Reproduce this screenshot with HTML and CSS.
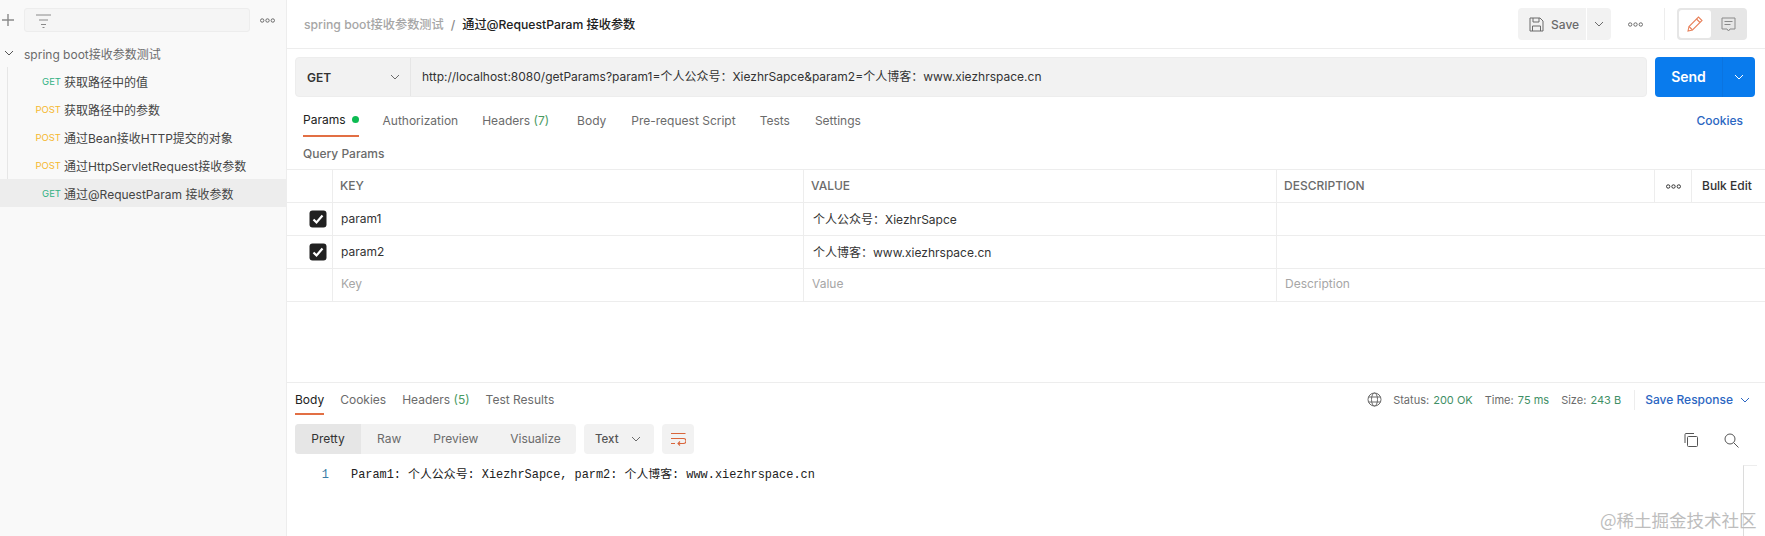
FILE: index.html
```html
<!DOCTYPE html>
<html lang="zh">
<head>
<meta charset="utf-8">
<title>Postman</title>
<link rel="stylesheet" href="styles.css">
</head>
<body>
<div class="app">
  <aside class="sidebar">
    <div class="side-top">
      <svg class="plus" width="14" height="14" viewBox="0 0 14 14"><path d="M7 1v12M1 7h12" stroke="#8a8a8a" stroke-width="1.4" fill="none"/></svg>
      <div class="side-search">
        <svg width="15" height="14" viewBox="0 0 15 14"><path d="M0 1h15M3 6h9M5 10.500h5M6.500 13.500h2" stroke="#8a8a8a" stroke-width="1" fill="none"/></svg>
      </div>
      <svg class="dots" width="15" height="5" viewBox="0 0 15 5"><g fill="none" stroke="#6b6b6b"><circle cx="2.200" cy="2.500" r="1.700"/><circle cx="7.500" cy="2.500" r="1.700"/><circle cx="12.800" cy="2.500" r="1.700"/></g></svg>
    </div>
    <div class="folder">
      <svg class="folder-chev" width="10" height="6" viewBox="0 0 10 6"><path d="M1 1l4 4 4-4" stroke="#555" fill="none"/></svg>
      <span>spring boot接收参数测试</span>
    </div>
    <ul class="tree">
      <li class="req"><span class="m get">GET</span><span>获取路径中的值</span></li>
      <li class="req"><span class="m post">POST</span><span>获取路径中的参数</span></li>
      <li class="req"><span class="m post">POST</span><span>通过Bean接收HTTP提交的对象</span></li>
      <li class="req"><span class="m post">POST</span><span>通过HttpServletRequest接收参数</span></li>
      <li class="req active"><span class="m get">GET</span><span>通过@RequestParam 接收参数</span></li>
    </ul>
  </aside>
  <main class="main">
    <header class="top">
      <div class="crumb"><span class="crumb-parent">spring boot接收参数测试</span><span class="crumb-sep">/</span><span class="crumb-cur">通过@RequestParam 接收参数</span></div>
      <div class="top-actions">
        <button class="save">
          <svg width="15" height="15" viewBox="0 0 15 15"><g fill="none" stroke="#6b6b6b"><path d="M1 1h10l3 3v10H1z"/><path d="M4 1v4h6V1M3.500 14V9h8v5"/></g></svg>
          <span>Save</span>
        </button>
        <button class="save-more"><svg width="10" height="6" viewBox="0 0 10 6"><path d="M1 1l4 4 4-4" stroke="#6b6b6b" fill="none"/></svg></button>
        <svg class="top-dots" width="15" height="5" viewBox="0 0 15 5"><g fill="none" stroke="#6b6b6b"><circle cx="2.200" cy="2.500" r="1.700"/><circle cx="7.500" cy="2.500" r="1.700"/><circle cx="12.800" cy="2.500" r="1.700"/></g></svg>
        <span class="vline"></span>
        <div class="toggle">
          <span class="toggle-on"><svg width="16" height="16" viewBox="0 0 16 16"><g fill="none" stroke="#e8825c" stroke-width="1.100"><path d="M1 15l1-4.500L11.500 1 15 4.500 5.500 14z"/><path d="M9.500 3l3.500 3.500M2 10.500L5.500 14"/></g></svg></span>
          <span class="toggle-off"><svg width="15" height="15" viewBox="0 0 15 15"><g fill="none" stroke="#8a8a8a"><path d="M1 1h13v11H9l-1.500 2L6 12H1z"/><path d="M3.500 4.500h8M3.500 7.500h6"/></g></svg></span>
        </div>
      </div>
    </header>
    <div class="urlrow">
      <div class="urlbar">
        <div class="method"><span>GET</span><svg width="10" height="6" viewBox="0 0 10 6"><path d="M1 1l4 4 4-4" stroke="#6b6b6b" fill="none"/></svg></div>
        <div class="url">http://localhost:8080/getParams?param1=个人公众号：XiezhrSapce&amp;param2=个人博客：www.xiezhrspace.cn</div>
      </div>
      <div class="send"><span class="send-l">Send</span><span class="send-r"><svg width="10" height="6" viewBox="0 0 10 6"><path d="M1 1l4 4 4-4" stroke="#fff" fill="none"/></svg></span></div>
    </div>
    <nav class="tabs">
      <span class="tab on">Params<i class="dot"></i></span>
      <span class="tab">Authorization</span>
      <span class="tab">Headers <em class="count">(7)</em></span>
      <span class="tab body-tab">Body</span>
      <span class="tab script-tab">Pre-request Script</span>
      <span class="tab">Tests</span>
      <span class="tab settings-tab">Settings</span>
      <span class="cookies">Cookies</span>
    </nav>
    <div class="qp">Query Params</div>
    <div class="grid">
      <div class="c first"></div><div class="c h">KEY</div><div class="c h">VALUE</div><div class="c h">DESCRIPTION</div><div class="c mid"><svg width="15" height="5" viewBox="0 0 15 5"><g fill="none" stroke="#333"><circle cx="2.200" cy="2.500" r="1.700"/><circle cx="7.500" cy="2.500" r="1.700"/><circle cx="12.800" cy="2.500" r="1.700"/></g></svg></div><div class="c bulk">Bulk Edit</div>
      <div class="c first chk"><svg width="18" height="18" viewBox="0 0 18 18"><rect x="0.500" y="0.500" width="17" height="17" rx="3" fill="#212121"/><path d="M4.500 9.500l3 3 6-7" stroke="#fff" stroke-width="2.200" fill="none"/></svg></div><div class="c">param1</div><div class="c val">个人公众号：XiezhrSapce</div><div class="c span3"></div>
      <div class="c first chk"><svg width="18" height="18" viewBox="0 0 18 18"><rect x="0.500" y="0.500" width="17" height="17" rx="3" fill="#212121"/><path d="M4.500 9.500l3 3 6-7" stroke="#fff" stroke-width="2.200" fill="none"/></svg></div><div class="c">param2</div><div class="c val">个人博客：www.xiezhrspace.cn</div><div class="c span3"></div>
      <div class="c first"></div><div class="c ph">Key</div><div class="c ph">Value</div><div class="c ph span3">Description</div>
    </div>
    <section class="resp">
      <div class="resp-head">
        <span class="rtab on">Body</span>
        <span class="rtab">Cookies</span>
        <span class="rtab">Headers <em class="count">(5)</em></span>
        <span class="rtab">Test Results</span>
        <div class="status">
          <svg width="15" height="15" viewBox="0 0 15 15"><g fill="none" stroke="#6b6b6b"><circle cx="7.500" cy="7.500" r="6.500"/><ellipse cx="7.500" cy="7.500" rx="3" ry="6.500"/><path d="M1.500 5h12M1.500 10h12"/></g></svg>
          <span class="st">Status: <b>200 OK</b></span>
          <span class="st">Time: <b>75 ms</b></span>
          <span class="st">Size: <b>243 B</b></span>
          <span class="vline short"></span>
          <span class="save-resp">Save Response</span>
          <svg width="10" height="6" viewBox="0 0 10 6"><path d="M1 1l4 4 4-4" stroke="#2b66c2" fill="none"/></svg>
        </div>
      </div>
      <div class="resp-tools">
        <div class="seg">
          <span class="seg-i on">Pretty</span><span class="seg-i raw">Raw</span><span class="seg-i prev">Preview</span><span class="seg-i vis">Visualize</span>
        </div>
        <div class="fmt"><span>Text</span><svg width="10" height="6" viewBox="0 0 10 6"><path d="M1 1l4 4 4-4" stroke="#6b6b6b" fill="none"/></svg></div>
        <div class="wrap"><svg width="15" height="14" viewBox="0 0 15 14"><g fill="none" stroke="#d9653b" stroke-width="1.100"><path d="M0 1.500h14.500M0 6.500h12.500a2 2 0 0 1 0 5H7M9 9.500l-2 2 2 2M0 11.500h4"/></g></svg></div>
        <div class="tools-r">
          <svg width="14" height="14" viewBox="0 0 14 14"><g fill="none" stroke="#555"><rect x="3.500" y="3.500" width="10" height="10" rx="1"/><path d="M1 10V1.500a1 1 0 0 1 1-1h8"/></g></svg>
          <svg width="15" height="15" viewBox="0 0 15 15"><g fill="none" stroke="#555"><circle cx="6" cy="6" r="5"/><path d="M9.700 9.700l4.800 4.800"/></g></svg>
        </div>
      </div>
      <div class="code"><span class="ln">1</span><span class="src">Param1: 个人公众号: XiezhrSapce, parm2: 个人博客: www.xiezhrspace.cn</span></div>
    </section>
  </main>
</div>
<div class="edge"></div>
<div class="watermark">@稀土掘金技术社区</div>
</body>
</html>
```
FILE: styles.css
```css
* { box-sizing: border-box; }
html, body { margin: 0; height: 536px; overflow: hidden; background: #fff; }
body { font-family: Inter, "Noto Sans CJK SC", sans-serif; font-size: 12px; color: #212121; position: relative; }
ul { list-style: none; margin: 0; padding: 0; }
button { font: inherit; border: 0; padding: 0; }
em { font-style: normal; }
svg { display: block; flex: none; }

.app { display: flex; height: 536px; }

.sidebar { width: 287px; flex: none; background: #f9f9f9; border-right: 1px solid #ededed; }
.side-top { display: flex; align-items: center; height: 24px; margin-top: 8px; padding-left: 1px; }
.side-search { width: 226px; height: 24px; margin-left: 9px; background: #f5f5f5; border: 1px solid #ededed; border-radius: 3px; padding: 5px 0 0 11px; }
.side-top .dots { margin-left: 10px; }
.folder { display: flex; align-items: center; height: 28px; margin-top: 7px; padding-left: 4px; color: #6b6b6b; }
.folder span { margin-left: 10px; }
.tree { margin-left: 7px; border-left: 1px solid #e6e6e6; }
.req { display: flex; align-items: center; height: 28px; color: #444; margin-left: -8px; }
.req.active { background: #ededed; }
.m { width: 61px; flex: none; text-align: right; font-size: 9.500px; }
.req .m + span { margin-left: 3px; }
.get { color: #34b184; }
.post { color: #f5b82e; }

.main { flex: 1; min-width: 0; display: flex; flex-direction: column; }
.top { height: 49px; flex: none; border-bottom: 1px solid #ededed; display: flex; align-items: center; justify-content: space-between; padding: 0 18px 0 17px; }
.crumb { display: flex; align-items: center; font-size: 12.200px; font-weight: 500; }
.crumb-parent { color: #a6a6a6; }
.crumb-sep { color: #8a8a8a; margin: 0 7px; }
.crumb-cur { color: #212121; }
.top-actions { display: flex; align-items: center; }
.save { display: flex; align-items: center; gap: 7px; width: 68px; height: 32px; padding-left: 11px; background: #f2f2f2; border-radius: 4px 0 0 4px; color: #6b6b6b; font-weight: 500; }
.save-more { width: 24px; height: 32px; margin-left: 1px; background: #f2f2f2; border-radius: 0 4px 4px 0; display: flex; align-items: center; justify-content: center; }
.top-dots { margin-left: 17px; }
.vline { width: 1px; height: 32px; background: #ededed; margin-left: 21px; }
.toggle { display: flex; width: 70px; height: 32px; margin-left: 12px; padding: 2px; background: #e6e6e6; border-radius: 4px; }
.toggle-on { width: 32px; background: #fff; border-radius: 3px; display: flex; align-items: center; justify-content: center; }
.toggle-off { flex: 1; display: flex; align-items: center; justify-content: center; }

.urlrow { display: flex; margin: 8px 10px 0 8px; height: 40px; flex: none; }
.urlbar { flex: 1; display: flex; background: #f2f2f2; border: 1px solid #ededed; border-radius: 4px; }
.method { width: 115px; flex: none; display: flex; align-items: center; justify-content: space-between; padding: 0 10px 0 11px; border-right: 1px solid #e6e6e6; font-weight: 600; color: #333; font-size: 12px; }
.url { padding-left: 11px; line-height: 37px; font-size: 12px; color: #333; }
.send { width: 100px; flex: none; margin-left: 8px; background: #097bed; color: #fff; border-radius: 4px; display: flex; font-weight: 600; font-size: 14px; }
.send-l { width: 68px; text-align: center; line-height: 40px; border-right: 1px solid #0b74e0; }
.send-r { flex: 1; display: flex; align-items: center; justify-content: center; }

.tabs { display: flex; align-items: flex-start; gap: 24px; height: 33px; margin-top: 7px; padding-left: 16px; flex: none; font-size: 12px; color: #6b6b6b; }
.tab { height: 33px; line-height: 33px; display: flex; gap: 4px; align-items: center; white-space: pre; }
.tab.on { color: #212121; border-bottom: 2px solid #e26f44; }
.body-tab { margin-left: 4px; }
.script-tab { margin-left: 1px; }
.settings-tab { margin-left: 1px; }
.count { color: #4a9a62; }
.dot { width: 7px; height: 7px; border-radius: 50%; background: #0cbb52; margin-left: 2px; }
.tab .count { margin-left: -4px; }
.cookies { margin-left: auto; margin-right: 22px; line-height: 33px; color: #2b66c2; font-weight: 500; }

.qp { flex: none; height: 32px; line-height: 34px; padding-left: 16px; font-weight: 500; color: #6b6b6b; font-size: 12px; }

.grid { flex: none; display: grid; grid-template-columns: 45px 471px 473px 378px 37px 1fr; grid-auto-rows: 33px; border-top: 1px solid #ededed; }
.c { border-bottom: 1px solid #ededed; border-left: 1px solid #ededed; display: flex; align-items: center; padding: 0 0 2px 8px; color: #333; font-size: 12px; min-width: 0; }
.first { border-left: 0; padding: 0; }
.chk { justify-content: flex-end; padding-right: 5px; }
.h { font-weight: 500; color: #6b6b6b; padding-left: 7px; }
.val { padding-left: 9px; }
.mid { padding: 0; justify-content: center; }
.bulk { font-weight: 500; white-space: nowrap; color: #333; padding-left: 10px; }
.span3 { grid-column: span 3; }
.ph { color: #a6a6a6; padding-bottom: 3px; }

.resp { margin-top: 80px; border-top: 1px solid #ededed; flex: 1; min-height: 0; }
.resp-head { display: flex; align-items: flex-start; gap: 16px; height: 33px; padding: 0 10px 0 8px; font-size: 12px; color: #6b6b6b; }
.rtab { height: 32px; line-height: 33px; white-space: pre; }
.rtab.on { color: #212121; border-bottom: 2px solid #e26f44; }
.status { margin-left: auto; display: flex; align-items: center; height: 33px; font-size: 11px; }
.st { margin-left: 12px; white-space: pre; color: #6b6b6b; }
.status svg + .st { margin-left: 11px; }
.st b { font-weight: 400; color: #3f8f66; margin-left: 1px; }
.vline.short { height: 20px; margin-left: 13px; }
.save-resp { margin-left: 10px; margin-right: 7px; color: #2b66c2; font-weight: 500; font-size: 12px; }
.status svg:last-child { margin-right: 5px; }

.resp-tools { display: flex; align-items: flex-start; margin-top: 8px; padding: 0 26px 0 8px; height: 30px; }
.seg { width: 281px; height: 30px; display: flex; background: #f2f2f2; border-radius: 4px; color: #6b6b6b; font-size: 12px; line-height: 30px; }
.seg-i { flex: none; }
.seg-i.on { width: 66px; text-align: center; background: #e6e6e6; border-radius: 4px 0 0 4px; color: #333; }
.raw { margin-left: 16px; }
.prev { margin-left: 32px; }
.vis { margin-left: 32px; }
.fmt { width: 70px; height: 30px; margin-left: 8px; background: #f2f2f2; border-radius: 4px; display: flex; align-items: center; justify-content: space-between; padding: 0 13px 0 11px; font-weight: 500; color: #555; font-size: 11.500px; }
.wrap { width: 32px; height: 30px; margin-left: 8px; background: #f2f2f2; border-radius: 4px; display: flex; align-items: center; justify-content: center; }
.tools-r { margin-left: auto; display: flex; align-items: center; gap: 26px; height: 30px; padding-top: 2px; }

.code { display: flex; margin-top: 13px; font-family: "Liberation Mono", "Noto Sans CJK SC", monospace; font-size: 11.900px; line-height: 16px; color: #212121; }
.ln { width: 64px; text-align: right; padding-right: 22px; color: #3a7ca5; flex: none; }

.edge { position: absolute; left: 1743px; top: 465px; width: 14px; height: 71px; border-left: 1px solid #dcdcdc; border-top: 1px solid #ededed; }
.watermark { position: absolute; left: 1600px; top: 508px; font-family: "Noto Sans CJK SC", sans-serif; font-size: 17.500px; line-height: 24px; color: #bdbdbd; white-space: nowrap; }
```
